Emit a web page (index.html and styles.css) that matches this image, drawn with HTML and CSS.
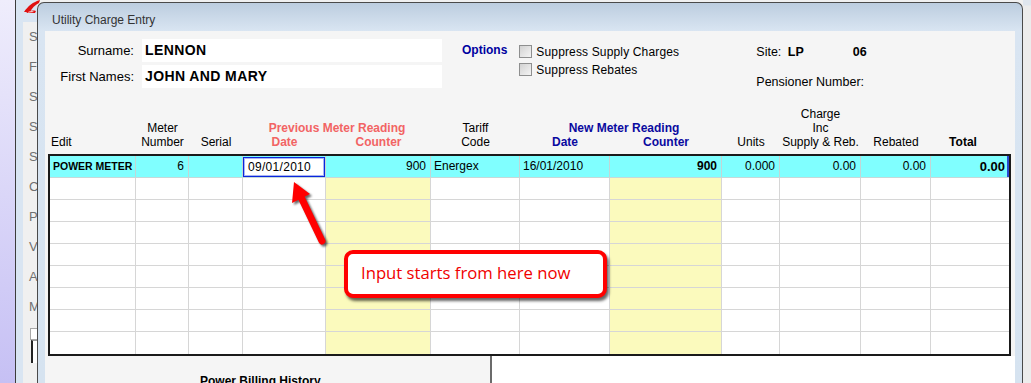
FILE: index.html
```html
<!DOCTYPE html>
<html lang="en">
<head>
    <meta charset="UTF-8">
    <title>Utility Charge Entry</title>
    <link rel="stylesheet" href="styles.css">
</head>
<body>

    <div class="desktop"></div>

    <!-- window behind the dialog -->
    <div class="bg-window">
        <div class="bg-title"></div>
        <div class="bg-client">
            <div class="bg-label">S</div>
            <div class="bg-label">Fi</div>
            <div class="bg-label">S</div>
            <div class="bg-label">S</div>
            <div class="bg-label">S</div>
            <div class="bg-label">C</div>
            <div class="bg-label">P</div>
            <div class="bg-label">V</div>
            <div class="bg-label">A</div>
            <div class="bg-label">M</div>
            <div class="bg-box"></div>
            <div class="bg-box2"></div>
        </div>
    </div>

    <svg class="app-icon" width="17" height="14" viewBox="0 0 17 14">
        <path d="M0 12 C4 6 9 2 16 0 L15 3 C11 5 8 8 6 12 Z" fill="#e01010"/>
        <path d="M2 13 C5 11 8 10 12 11 L11 13 Z" fill="#e01010"/>
        <path d="M4 12 C6 11 9 11 10 12 L4 12.5 Z" fill="#ffffff"/>
    </svg>

    <div class="dialog">
        <div class="title-bar">Utility Charge Entry</div>
        <div class="client">

            <div class="top">
                <div class="names">
                    <label>Surname:</label>
                    <div class="field">LENNON</div>
                    <label>First Names:</label>
                    <div class="field">JOHN AND MARY</div>
                </div>
                <div class="options-title">Options</div>
                <div class="checks">
                    <div class="check"><span class="box"></span>Suppress Supply Charges</div>
                    <div class="check"><span class="box"></span>Suppress Rebates</div>
                </div>
                <div class="site">
                    <div class="site-row">Site: <b class="site-code">LP</b><b>06</b></div>
                    <div class="site-row pens">Pensioner Number:</div>
                </div>
            </div>

            <div class="grid-head cols">
                <div class="h left">Edit</div>
                <div class="h">Meter<br>Number</div>
                <div class="h">Serial</div>
                <div class="h group prev">
                    <div class="gt">Previous Meter Reading</div>
                    <div class="sub"><span>Date</span><span>Counter</span></div>
                </div>
                <div class="h">Tariff<br>Code</div>
                <div class="h group new">
                    <div class="gt">New Meter Reading</div>
                    <div class="sub"><span>Date</span><span>Counter</span></div>
                </div>
                <div class="h">Units</div>
                <div class="h">Charge<br>Inc<br>Supply &amp; Reb.</div>
                <div class="h">Rebated</div>
                <div class="h total-h">Total</div>
            </div>

            <div class="grid-box">
                <div class="row cols current">
                    <div class="bold small">POWER METER</div>
                    <div class="num">6</div>
                    <div></div>
                    <div class="date-cell"><div class="date-input">09/01/2010</div></div>
                    <div class="num">900</div>
                    <div>Energex</div>
                    <div>16/01/2010</div>
                    <div class="num bold">900</div>
                    <div class="num">0.000</div>
                    <div class="num">0.00</div>
                    <div class="num">0.00</div>
                    <div class="num bold big sel">0.00</div>
                </div>
                <div class="row cols"><div></div><div></div><div></div><div></div><div class="yel"></div><div></div><div></div><div class="yel"></div><div></div><div></div><div></div><div></div></div>
                <div class="row cols"><div></div><div></div><div></div><div></div><div class="yel"></div><div></div><div></div><div class="yel"></div><div></div><div></div><div></div><div></div></div>
                <div class="row cols"><div></div><div></div><div></div><div></div><div class="yel"></div><div></div><div></div><div class="yel"></div><div></div><div></div><div></div><div></div></div>
                <div class="row cols"><div></div><div></div><div></div><div></div><div class="yel"></div><div></div><div></div><div class="yel"></div><div></div><div></div><div></div><div></div></div>
                <div class="row cols"><div></div><div></div><div></div><div></div><div class="yel"></div><div></div><div></div><div class="yel"></div><div></div><div></div><div></div><div></div></div>
                <div class="row cols"><div></div><div></div><div></div><div></div><div class="yel"></div><div></div><div></div><div class="yel"></div><div></div><div></div><div></div><div></div></div>
                <div class="row cols"><div></div><div></div><div></div><div></div><div class="yel"></div><div></div><div></div><div class="yel"></div><div></div><div></div><div></div><div></div></div>
                <div class="row cols last"><div></div><div></div><div></div><div></div><div class="yel"></div><div></div><div></div><div class="yel"></div><div></div><div></div><div></div><div></div></div>
            </div>

            <div class="lower">
                <div class="history">Power Billing History</div>
                <div class="lower-right"></div>
            </div>
        </div>
    </div>

    <div class="edge"></div>

    <!-- annotation over the screenshot -->
    <svg class="arrow" width="48" height="70" viewBox="0 0 48 70">
        <line x1="17" y1="16" x2="39" y2="62" stroke="#ff0000" stroke-width="7" stroke-linecap="round"/>
        <polygon points="11,3 27,15 9,24" fill="#ff0000"/>
    </svg>
    <div class="callout">Input starts from here now</div>

</body>
</html>
```

FILE: styles.css
```css
body {
    margin: 0;
    width: 1031px;
    height: 383px;
    overflow: hidden;
    display: flex;
    align-items: flex-start;
    font-family: "Liberation Sans", Arial, sans-serif;
    font-size: 12px;
    color: #000;
    background: #f0f0f0;
}
.desktop {
    width: 15px;
    height: 383px;
    background: linear-gradient(to bottom, #efedfc, #c6c0f4);
}
.bg-window {
    width: 22px;
    height: 383px;
    box-sizing: border-box;
    border-left: 1px solid #3c3c3c;
    padding-left: 7px;
    background: #d9e5f2;
    display: flex;
    flex-direction: column;
}
.bg-title {
    height: 22px;
}
.bg-client {
    flex: 1;
    background: #f0f0f0;
    overflow: hidden;
    color: #707070;
    font-size: 13px;
    padding-left: 6px;
}
.bg-label {
    height: 30px;
    line-height: 30px;
}
.bg-box {
    margin-top: 6px;
    height: 10px;
    border: 1px solid #a8a8a8;
    border-right: none;
    background: #fff;
    margin-left: 1px;
}
.bg-box2 {
    height: 22px;
    border-left: 2px solid #222;
    border-top: 1px solid #999;
    background: #fff;
    margin-left: 2px;
}
.app-icon {
    position: absolute;
    z-index: 2;
    left: 24px;
    top: 0;
}
.dialog {
    position: relative;
    z-index: 1;
    width: 986px;
    height: 381px;
    margin-top: 2px;
    box-sizing: border-box;
    border: 1px solid #4a4a4a;
    border-bottom: none;
    border-radius: 7px 7px 0 0;
    padding: 0 7px;
    background: linear-gradient(to bottom, #bccddf, #d9e5f2 28px, #d6e3f0);
    display: flex;
    flex-direction: column;
}
.title-bar {
    height: 28px;
    box-sizing: border-box;
    padding: 6px 0 0 7px;
    line-height: 22px;
    color: #333;
}
.client {
    flex: 1;
    background: #f5f5f5;
}
.edge {
    flex: 1;
    height: 383px;
    background: linear-gradient(to bottom, #dfe6ee 0, #dfe6ee 5px, #ececec 6px);
}

/* top form */
.top {
    height: 76px;
    display: flex;
}
.names {
    display: grid;
    grid-template-columns: 89px 300px;
    grid-auto-rows: 23px;
    column-gap: 8px;
    row-gap: 3px;
    padding-top: 8px;
}
.names label {
    text-align: right;
    font-size: 13px;
    line-height: 23px;
}
.field {
    background: #fff;
    padding-left: 3px;
    font-size: 14px;
    font-weight: bold;
    letter-spacing: 0.4px;
    line-height: 22px;
}
.options-title {
    margin-left: 20px;
    padding-top: 12px;
    line-height: 14px;
    font-weight: bold;
    color: #0000a0;
}
.checks {
    margin-left: 12px;
    width: 237px;
    padding-top: 14px;
    display: flex;
    flex-direction: column;
    gap: 5px;
}
.check {
    display: flex;
    align-items: center;
    gap: 4px;
    height: 13px;
    letter-spacing: 0.15px;
}
.box {
    width: 11px;
    height: 11px;
    border: 1px solid #8e8f8f;
    background: linear-gradient(135deg, #d2d2d2, #f4f4f4);
}
.site {
    padding-top: 13px;
    font-size: 12.5px;
}
.site-row {
    line-height: 16px;
}
.site-code {
    display: inline-block;
    width: 65px;
    margin-left: 3px;
}
.pens {
    margin-top: 14px;
}

/* meter grid */
.cols {
    display: grid;
    grid-template-columns: 86px 53px 54px 83px 105px 89px 90px 112px 58px 81px 70px 78px;
}
.grid-head {
    height: 42px;
    margin-left: 5px;
    width: 959px;
    align-items: end;
    line-height: 14px;
    margin-bottom: 5px;
}
.h {
    text-align: center;
}
.h.left {
    text-align: left;
    padding-left: 1px;
}
.group {
    grid-column: span 2;
    font-weight: bold;
}
.group .sub {
    display: grid;
}
.prev {
    color: #f26464;
}
.prev .sub {
    grid-template-columns: 83px 105px;
}
.new {
    color: #0a0aa0;
}
.new .gt {
    padding-left: 6px;
}
.new .sub {
    grid-template-columns: 90px 112px;
}
.total-h {
    font-weight: bold;
    padding-right: 14px;
}
.grid-box {
    margin-left: 3px;
    width: 963px;
    box-sizing: border-box;
    border: 2px solid #1a1a1a;
    background: #fff;
}
.row {
    height: 22px;
    box-sizing: border-box;
    border-bottom: 1px solid #d6d6d6;
}
.row.last {
    border-bottom: none;
}
.row > div {
    border-right: 1px solid #d6d6d6;
    padding: 0 3px;
    line-height: 21px;
    white-space: nowrap;
    overflow: hidden;
}
.row > div:last-child {
    border-right: none;
}
.yel {
    background: #fbfabd;
}
.current {
    background: #80ffff;
    border-bottom-color: #c6d9d9;
}
.current > div {
    border-right-color: #c2d6d6;
}
.num {
    text-align: right;
    padding-right: 4px !important;
}
.bold {
    font-weight: bold;
}
.small {
    font-size: 10.5px;
}
.big {
    font-size: 13px;
}
.sel {
    box-shadow: inset -2px 0 0 #2a4ad0;
}
.row > .date-cell {
    padding: 1px 0 0 0;
}
.date-input {
    height: 20px;
    box-sizing: border-box;
    border: 1px solid #0a26dc;
    box-shadow: inset 0 0 0 1px #a8b4f4;
    background: #fff;
    padding-left: 4px;
    line-height: 18px;
    letter-spacing: 0.3px;
}

/* lower panels */
.lower {
    display: flex;
    height: 28px;
}
.history {
    width: 445px;
    padding: 18px 0 0 155px;
    box-sizing: border-box;
    font-weight: bold;
    line-height: 14px;
}
.lower-right {
    flex: 1;
    border-left: 2px solid #6b6b6b;
    background: #fff;
}

/* annotation */
.arrow {
    position: absolute;
    z-index: 2;
    left: 283px;
    top: 179px;
    filter: drop-shadow(2px 2px 1px rgba(0, 0, 0, 0.6));
}
.callout {
    position: absolute;
    z-index: 2;
    left: 344px;
    top: 250px;
    width: 263px;
    height: 48px;
    box-sizing: border-box;
    border: 4px solid #ff0000;
    border-radius: 9px;
    background: #fff;
    box-shadow: 2px 3px 3px rgba(0, 0, 0, 0.6);
    padding-left: 13px;
    line-height: 38px;
    color: #f00000;
    font-family: "Open Sans", sans-serif;
    font-size: 16.7px;
}
```
